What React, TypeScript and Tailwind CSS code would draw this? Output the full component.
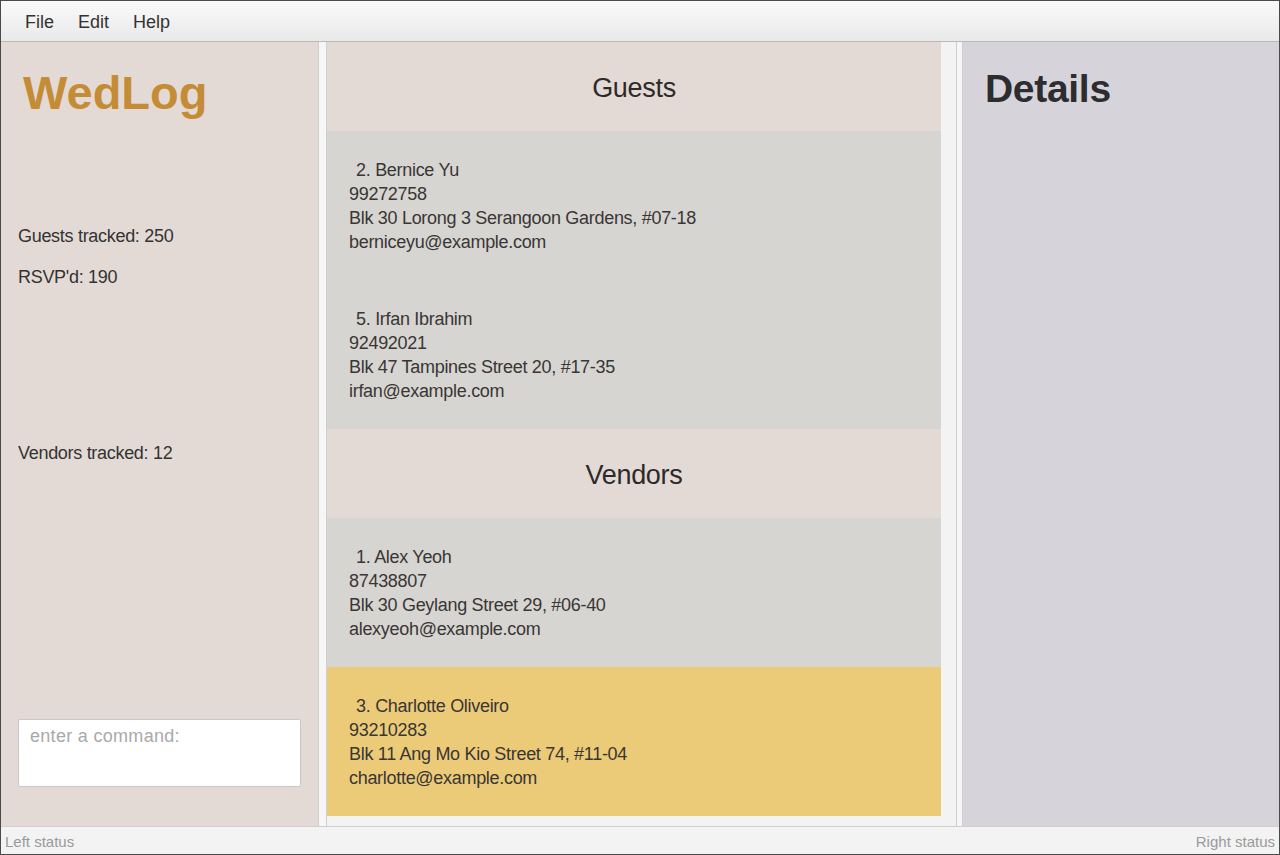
import React from 'react';

type Person = {
  idx: number;
  name: string;
  phone: string;
  address: string;
  email: string;
  selected?: boolean;
};

const GUESTS: Person[] = [
  { idx: 2, name: 'Bernice Yu', phone: '99272758', address: 'Blk 30 Lorong 3 Serangoon Gardens, #07-18', email: 'berniceyu@example.com' },
  { idx: 5, name: 'Irfan Ibrahim', phone: '92492021', address: 'Blk 47 Tampines Street 20, #17-35', email: 'irfan@example.com' },
];

const VENDORS: Person[] = [
  { idx: 1, name: 'Alex Yeoh', phone: '87438807', address: 'Blk 30 Geylang Street 29, #06-40', email: 'alexyeoh@example.com' },
  { idx: 3, name: 'Charlotte Oliveiro', phone: '93210283', address: 'Blk 11 Ang Mo Kio Street 74, #11-04', email: 'charlotte@example.com', selected: true },
];

function SectionHeader({ title }: { title: string }) {
  return (
    <div className="h-[89px] shrink-0 pt-[3px] bg-[#e4dad5] flex items-center justify-center text-[27px] text-[#2e2a2a] tracking-[-0.3px]">
      {title}
    </div>
  );
}

function PersonCard({ p }: { p: Person }) {
  return (
    <div
      className={`h-[149px] shrink-0 pl-[22px] pt-[27px] text-[18px] leading-[24px] text-[#3a3634] tracking-[-0.3px] ${
        p.selected ? 'bg-[#ebcb78]' : 'bg-[#d6d5d2]'
      }`}
    >
      <div className="pl-[7px]">{p.idx}. {p.name}</div>
      <div>{p.phone}</div>
      <div>{p.address}</div>
      <div>{p.email}</div>
    </div>
  );
}

export default function App() {
  return (
    <div
      className="w-[1280px] h-[855px] flex flex-col border border-[#4a4a4a] bg-[#f3f3f3] overflow-hidden"
      style={{ fontFamily: '"Liberation Sans", Arial, sans-serif' }}
    >
      {/* Menu bar */}
      <div className="h-[41px] shrink-0 flex items-center gap-[24px] pl-[24px] pt-[2px] bg-gradient-to-b from-[#fafafa] to-[#e9e9e9] border-b border-[#b9b9b9] text-[18px] text-[#333]">
        <span>File</span>
        <span>Edit</span>
        <span>Help</span>
      </div>

      {/* Main */}
      <div className="flex-1 flex min-h-0">
        {/* Left panel */}
        <div className="w-[317px] shrink-0 bg-[#e4dad5] flex flex-col px-[17px]">
          <div className="pt-[23px] pl-[5px] text-[47px] font-bold text-[#c58c36] leading-[56px]">
            WedLog
          </div>
          <div className="mt-[103px] text-[18px] text-[#333] tracking-[-0.3px] leading-[24px]">Guests tracked: 250</div>
          <div className="mt-[17px] text-[18px] text-[#333] tracking-[-0.3px] leading-[24px]">RSVP'd: 190</div>
          <div className="mt-[152px] text-[18px] text-[#333] tracking-[-0.3px] leading-[24px]">Vendors tracked: 12</div>
          <div className="flex-1" />
          <div className="mb-[39px] h-[68px] bg-white border border-[#c8c8c8] rounded-[2px] px-[11px] pt-[3px] text-[18px] text-[#a9a9a9] tracking-[0.3px]">
            enter a command:
          </div>
        </div>

        {/* Divider */}
        <div className="w-[9px] shrink-0 bg-[#f6f6f6] border-l border-r border-[#cfcfcf]" />

        {/* Middle list */}
        <div className="w-[629px] shrink-0 flex bg-[#f3f3f3]">
          <div className="w-[614px] flex flex-col overflow-hidden">
            <SectionHeader title="Guests" />
            {GUESTS.map((p) => (
              <PersonCard key={p.idx} p={p} />
            ))}
            <SectionHeader title="Vendors" />
            {VENDORS.map((p) => (
              <PersonCard key={p.idx} p={p} />
            ))}
          </div>
        </div>

        {/* Divider */}
        <div className="w-[7px] shrink-0 bg-[#f6f6f6] border-l border-r border-[#cfcfcf]" />

        {/* Right panel */}
        <div className="flex-1 bg-[#d6d4da] pl-[22px] pt-[23px]">
          <div className="text-[39px] font-bold text-[#2d2c2e] leading-[48px] tracking-[-0.3px]">Details</div>
        </div>
      </div>

      {/* Status bar */}
      <div className="h-[28px] shrink-0 flex items-center justify-between px-[4px] pt-[3px] bg-[#f3f3f3] border-t border-[#cfcfcf] text-[15px] text-[#9a9a9a]">
        <span>Left status</span>
        <span>Right status</span>
      </div>
    </div>
  );
}
